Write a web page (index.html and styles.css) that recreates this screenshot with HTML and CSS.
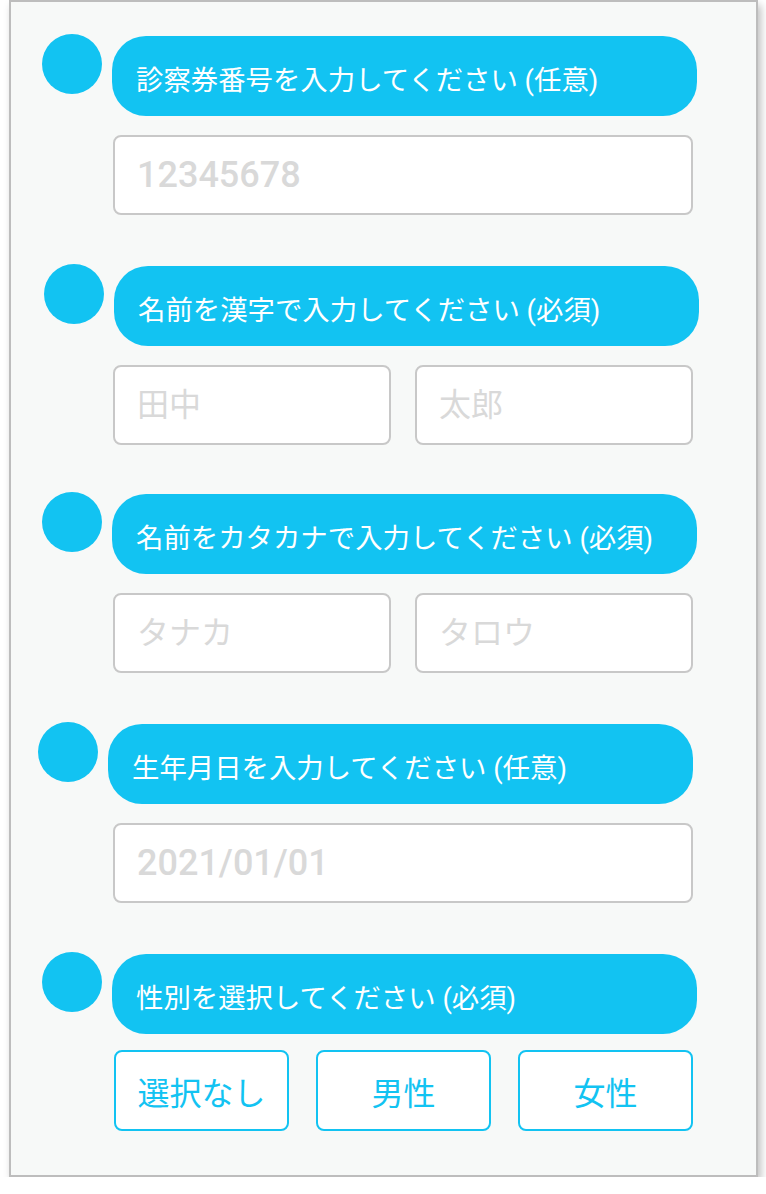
FILE: index.html
```html
<!DOCTYPE html>
<html lang="ja">
<head>
    <meta charset="utf-8">
    <title>問診票</title>
    <link rel="stylesheet" href="styles.css">
</head>
<body>
    <form class="card" id="entryForm">
        <div class="section">
            <div class="head">
                <div class="dot"></div>
                <div class="bubble">診察券番号を入力してください (任意)</div>
            </div>
            <div class="fields">
                <input class="field num" type="text" placeholder="12345678">
            </div>
        </div>

        <div class="section tight">
            <div class="head head-right">
                <div class="dot"></div>
                <div class="bubble">名前を漢字で入力してください (必須)</div>
            </div>
            <div class="fields two">
                <input class="field" type="text" placeholder="田中">
                <input class="field" type="text" placeholder="太郎">
            </div>
        </div>

        <div class="section">
            <div class="head">
                <div class="dot"></div>
                <div class="bubble">名前をカタカナで入力してください (必須)</div>
            </div>
            <div class="fields two">
                <input class="field" type="text" placeholder="タナカ">
                <input class="field" type="text" placeholder="タロウ">
            </div>
        </div>

        <div class="section">
            <div class="head head-left">
                <div class="dot"></div>
                <div class="bubble">生年月日を入力してください (任意)</div>
            </div>
            <div class="fields">
                <input class="field num" type="text" placeholder="2021/01/01">
            </div>
        </div>

        <div class="section">
            <div class="head">
                <div class="dot"></div>
                <div class="bubble">性別を選択してください (必須)</div>
            </div>
            <div class="fields three">
                <button type="button" class="choice">選択なし</button>
                <button type="button" class="choice">男性</button>
                <button type="button" class="choice">女性</button>
            </div>
        </div>
    </form>
</body>
</html>
```

FILE: styles.css
```css
body {
    margin: 0;
    background: #fff;
    font-family: Roboto, "Noto Sans CJK JP", sans-serif;
}

.card {
    width: 749px;
    height: 1177px;
    box-sizing: border-box;
    margin: 0 0 0 9px;
    padding: 32px 0 0 31px;
    background: #f7f9f8;
    border: 2px solid #bdbdbd;
    box-shadow: 3px 5px 8px rgba(0, 0, 0, 0.25);
}

.section {
    margin-bottom: 49px;
}

.section.tight {
    margin-bottom: 47px;
}

.head {
    display: flex;
    gap: 10px;
}

.head-right {
    margin-left: 2px;
}

.head-left {
    margin-left: -4px;
}

.dot {
    width: 60px;
    height: 60px;
    border-radius: 50%;
    background: #12c3f2;
    flex-shrink: 0;
}

.bubble {
    width: 585px;
    height: 80px;
    box-sizing: border-box;
    margin-top: 2px;
    padding: 3px 0 0 24px;
    display: flex;
    align-items: center;
    background: #12c3f2;
    border-radius: 34px;
    color: #fff;
    font-size: 27.4px;
    font-family: Roboto, "Noto Sans CJK JP", sans-serif;
    white-space: nowrap;
}

.fields {
    width: 580px;
    margin: 19px 0 0 71px;
    display: grid;
}

.fields.two {
    grid-template-columns: 1fr 1fr;
    gap: 24px;
}

.fields.three {
    grid-template-columns: 1fr 1fr 1fr;
    gap: 27px;
    margin-top: 16px;
    margin-left: 72px;
    width: 579px;
}

.field {
    width: 100%;
    height: 80px;
    box-sizing: border-box;
    padding: 0 0 0 22px;
    border: 2px solid #c8c8c8;
    border-radius: 8px;
    background: #fff;
    font-family: Roboto, "Noto Sans CJK JP", sans-serif;
    font-size: 32px;
    color: #333;
    outline: none;
}

.field.num {
    font-size: 36px;
    font-weight: 500;
}

.field::placeholder {
    color: #d9d9d9;
}

.choice {
    height: 81px;
    border: 2px solid #12c3f2;
    border-radius: 8px;
    background: #fff;
    color: #12c3f2;
    font-family: Roboto, "Noto Sans CJK JP", sans-serif;
    font-size: 32px;
    padding: 0;
    cursor: pointer;
}
```
